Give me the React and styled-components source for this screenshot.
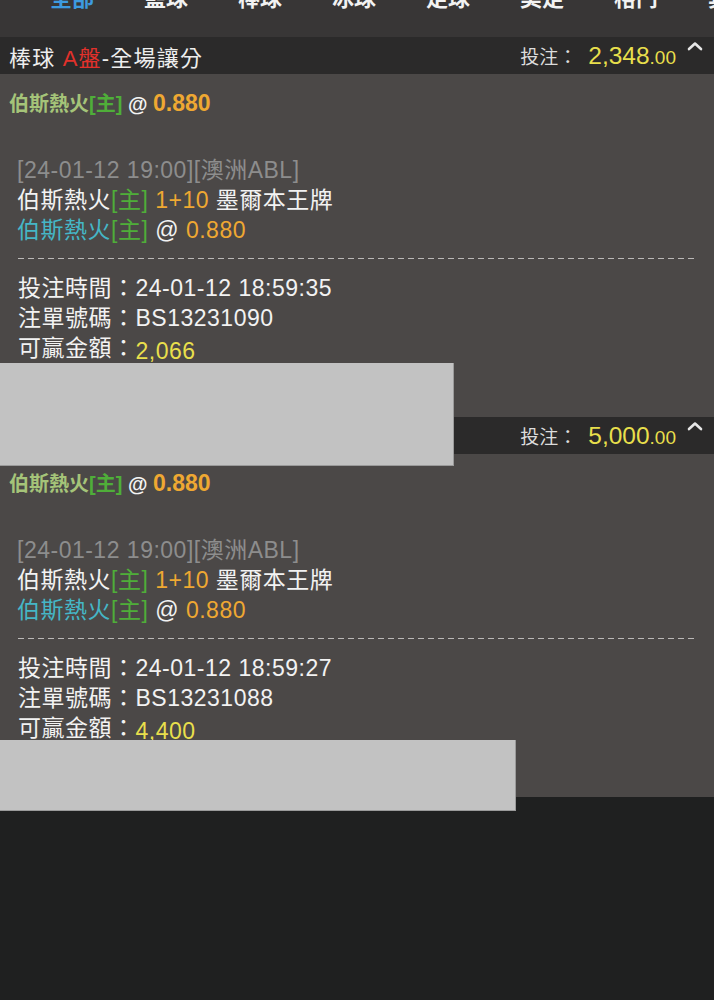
import React from 'react';
import styled, { createGlobalStyle } from 'styled-components';

const GlobalStyle = createGlobalStyle`
    body {
        margin: 0;
        background: #1f2020;
        font-family: "Liberation Sans", "Noto Sans CJK TC", sans-serif;
    }
`;

const tabs = ['全部', '籃球', '棒球', '冰球', '足球', '美足', '格鬥', '其他'];

const bets = [
    {
        stake: '2,348',
        time: '24-01-12 18:59:35',
        ticket: 'BS13231090',
        win: '2,066',
        redact: { top: 289, width: 454, height: 103 },
    },
    {
        stake: '5,000',
        time: '24-01-12 18:59:27',
        ticket: 'BS13231088',
        win: '4,400',
        redact: { top: 286, width: 516, height: 71 },
    },
];

function Chevron() {
    return (
        <ChevronIcon width="16" height="10" viewBox="0 0 16 10">
            <polyline points="2,8 8,2.5 14,8" fill="none" stroke="#e6e6e6" strokeWidth="2.6" strokeLinecap="round" strokeLinejoin="round" />
        </ChevronIcon>
    );
}

export default function App() {
    return (
        <Page>
            <GlobalStyle />
            <Nav>
                <TabRow>
                    {tabs.map((t, i) => (
                        <Tab key={t} active={i === 0}>{t}</Tab>
                    ))}
                </TabRow>
            </Nav>

            {bets.map((b) => (
                <Bet key={b.ticket}>
                    <BetHeader>
                        <Title>棒球 <Red>A盤</Red>-全場讓分</Title>
                        <Stake>
                            投注：
                            <Amount>{b.stake}<Cents>.00</Cents></Amount>
                        </Stake>
                        <Chevron />
                    </BetHeader>
                    <Card>
                        <Pick>
                            <Home>伯斯熱火</Home><Tag>[主]</Tag> <At>@</At> <PickOdds>0.880</PickOdds>
                        </Pick>
                        <Match>
                            <Line muted>[24-01-12 19:00][澳洲ABL]</Line>
                            <Line>伯斯熱火<Tag>[主]</Tag> <Odds>1+10</Odds> 墨爾本王牌</Line>
                            <Line><Team>伯斯熱火</Team><Tag>[主]</Tag> @ <Odds>0.880</Odds></Line>
                        </Match>
                        <Dash />
                        <Details>
                            <Line>投注時間：{b.time}</Line>
                            <Line>注單號碼：{b.ticket}</Line>
                            <Line>可贏金額：<Win>{b.win}</Win></Line>
                        </Details>
                        <Redact
                            style={{ top: b.redact.top, width: b.redact.width, height: b.redact.height }}
                        />
                    </Card>
                </Bet>
            ))}
        </Page>
    );
}

const Page = styled.div`
    width: 714px;
    min-height: 1000px;
    background: #1f2020;
`;

const Nav = styled.div`
    height: 37px;
    background: #383636;
    overflow: hidden;
`;

const TabRow = styled.div`
    display: flex;
    padding-left: 25px;
    margin-top: -12px;
`;

const Tab = styled.div`
    flex: 0 0 94px;
    text-align: center;
    font-size: 22px;
    line-height: 22px;
    font-weight: bold;
    color: ${(p) => (p.active ? '#3d9be0' : '#f2f2f2')};
`;

const Bet = styled.div`
    display: flex;
    flex-direction: column;
`;

const BetHeader = styled.div`
    display: flex;
    align-items: center;
    height: 37px;
    padding: 0 11px 0 9px;
    background: #2b2a2a;
`;

const Title = styled.div`
    flex: 1;
    font-size: 22px;
    letter-spacing: 1.2px;
    color: #eeeeee;
`;

const Red = styled.span`
    color: #e2312b;
`;

const Stake = styled.div`
    font-size: 19px;
    color: #dcdcdc;
    display: flex;
    align-items: baseline;
`;

const Amount = styled.span`
    font-size: 24.5px;
    color: #e8df4c;
    margin-left: 11px;
`;

const Cents = styled.span`
    font-size: 19px;
`;

const ChevronIcon = styled.svg`
    align-self: flex-start;
    margin: 4px 0 0 11px;
`;

const Card = styled.div`
    position: relative;
    background: #4b4847;
    padding: 14px 0 54px;
`;

const Pick = styled.div`
    height: 30px;
    padding-left: 9px;
    font-size: 20px;
    line-height: 30px;
    font-weight: bold;
`;

const Home = styled.span`
    color: #a5c479;
`;

const Tag = styled.span`
    color: #4fae39;
`;

const At = styled.span`
    color: #f4f4f4;
`;

const Odds = styled.span`
    color: #efa832;
`;

const PickOdds = styled(Odds)`
    font-size: 23px;
`;

const Match = styled.div`
    margin-top: 37px;
    padding-left: 17px;
`;

const Line = styled.div`
    height: 30px;
    font-size: 23px;
    line-height: 30px;
    letter-spacing: 0.5px;
    color: ${(p) => (p.muted ? '#8d8d8d' : '#f2f2f2')};
    white-space: nowrap;
`;

const Team = styled.span`
    color: #45b6c6;
`;

const Dash = styled.div`
    height: 1px;
    margin: 13px 17px 0 18px;
    background-image: repeating-linear-gradient(to right, #bbb9b8 0 6px, transparent 6px 10px);
`;

const Details = styled.div`
    margin-top: 14px;
    padding-left: 18px;
`;

const Win = styled.span`
    color: #e8df4c;
    vertical-align: -3px;
`;

const Redact = styled.div`
    position: absolute;
    left: 0;
    z-index: 2;
    background: #c2c2c2;
    border-bottom: 1px solid #9a9a9a;
    border-right: 1px solid #9a9a9a;
    box-sizing: border-box;
`;
